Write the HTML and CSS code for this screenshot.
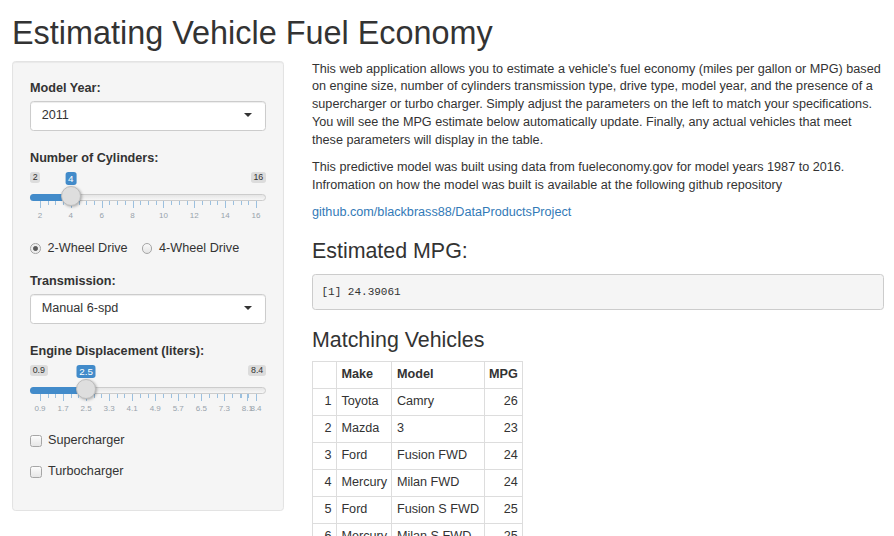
FILE: index.html
```html
<!DOCTYPE html>
<html lang="en">
<head>
<meta charset="utf-8">
<title>Estimating Vehicle Fuel Economy</title>
<link rel="stylesheet" href="styles.css">
</head>
<body>
<div class="container">
  <h1 class="title">Estimating Vehicle Fuel Economy</h1>
  <div class="row">
    <aside class="sidebar well">
      <div class="form-group">
        <label class="control-label">Model Year:</label>
        <div class="select"><span class="select-value">2011</span><span class="caret"></span></div>
      </div>

      <div class="form-group slider-group">
        <label class="control-label">Number of Cylinders:</label>
        <div class="irs">
          <span class="irs-line"></span>
          <span class="irs-min">2</span>
          <span class="irs-max">16</span>
          <div class="irs-scale">
            <span class="irs-bar" style="width: calc(10px + 14.286%)"></span>
            <div class="irs-grid">
              <span class="pol" style="left:0%"></span>
              <span class="pol small" style="left:3.571%"></span>
              <span class="pol small" style="left:7.143%"></span>
              <span class="pol small" style="left:10.714%"></span>
              <span class="pol" style="left:14.286%"></span>
              <span class="pol small" style="left:17.857%"></span>
              <span class="pol small" style="left:21.429%"></span>
              <span class="pol small" style="left:25%"></span>
              <span class="pol" style="left:28.571%"></span>
              <span class="pol small" style="left:32.143%"></span>
              <span class="pol small" style="left:35.714%"></span>
              <span class="pol small" style="left:39.286%"></span>
              <span class="pol" style="left:42.857%"></span>
              <span class="pol small" style="left:46.429%"></span>
              <span class="pol small" style="left:50%"></span>
              <span class="pol small" style="left:53.571%"></span>
              <span class="pol" style="left:57.143%"></span>
              <span class="pol small" style="left:60.714%"></span>
              <span class="pol small" style="left:64.286%"></span>
              <span class="pol small" style="left:67.857%"></span>
              <span class="pol" style="left:71.429%"></span>
              <span class="pol small" style="left:75%"></span>
              <span class="pol small" style="left:78.571%"></span>
              <span class="pol small" style="left:82.143%"></span>
              <span class="pol" style="left:85.714%"></span>
              <span class="pol small" style="left:89.286%"></span>
              <span class="pol small" style="left:92.857%"></span>
              <span class="pol small" style="left:96.429%"></span>
              <span class="pol" style="left:100%"></span>
              <span class="gtext" style="left:0%">2</span>
              <span class="gtext" style="left:14.286%">4</span>
              <span class="gtext" style="left:28.571%">6</span>
              <span class="gtext" style="left:42.857%">8</span>
              <span class="gtext" style="left:57.143%">10</span>
              <span class="gtext" style="left:71.429%">12</span>
              <span class="gtext" style="left:85.714%">14</span>
              <span class="gtext" style="left:100%">16</span>
            </div>
            <span class="irs-single" style="left:14.286%">4</span>
            <span class="irs-handle" style="left:14.286%"></span>
          </div>
        </div>
      </div>

      <div class="form-group radio-group">
        <label class="radio-inline"><span class="radio-circle checked"></span><span>2-Wheel Drive</span></label>
        <label class="radio-inline"><span class="radio-circle"></span><span>4-Wheel Drive</span></label>
      </div>

      <div class="form-group">
        <label class="control-label">Transmission:</label>
        <div class="select"><span class="select-value">Manual 6-spd</span><span class="caret"></span></div>
      </div>

      <div class="form-group slider-group">
        <label class="control-label">Engine Displacement (liters):</label>
        <div class="irs">
          <span class="irs-line"></span>
          <span class="irs-min">0.9</span>
          <span class="irs-max">8.4</span>
          <div class="irs-scale">
            <span class="irs-bar" style="width: calc(10px + 21.333%)"></span>
            <div class="irs-grid">
              <span class="pol" style="left:0%"></span>
              <span class="pol small" style="left:3.556%"></span>
              <span class="pol small" style="left:7.111%"></span>
              <span class="pol" style="left:10.667%"></span>
              <span class="pol small" style="left:14.222%"></span>
              <span class="pol small" style="left:17.778%"></span>
              <span class="pol" style="left:21.333%"></span>
              <span class="pol small" style="left:24.889%"></span>
              <span class="pol small" style="left:28.444%"></span>
              <span class="pol" style="left:32%"></span>
              <span class="pol small" style="left:35.556%"></span>
              <span class="pol small" style="left:39.111%"></span>
              <span class="pol" style="left:42.667%"></span>
              <span class="pol small" style="left:46.222%"></span>
              <span class="pol small" style="left:49.778%"></span>
              <span class="pol" style="left:53.333%"></span>
              <span class="pol small" style="left:56.889%"></span>
              <span class="pol small" style="left:60.444%"></span>
              <span class="pol" style="left:64%"></span>
              <span class="pol small" style="left:67.556%"></span>
              <span class="pol small" style="left:71.111%"></span>
              <span class="pol" style="left:74.667%"></span>
              <span class="pol small" style="left:78.222%"></span>
              <span class="pol small" style="left:81.778%"></span>
              <span class="pol" style="left:85.333%"></span>
              <span class="pol small" style="left:88.889%"></span>
              <span class="pol small" style="left:92.444%"></span>
              <span class="pol" style="left:96%"></span>
              <span class="pol small" style="left:92.889%"></span>
              <span class="pol small" style="left:96.444%"></span>
              <span class="pol" style="left:100%"></span>
              <span class="gtext" style="left:0%">0.9</span>
              <span class="gtext" style="left:10.667%">1.7</span>
              <span class="gtext" style="left:21.333%">2.5</span>
              <span class="gtext" style="left:32%">3.3</span>
              <span class="gtext" style="left:42.667%">4.1</span>
              <span class="gtext" style="left:53.333%">4.9</span>
              <span class="gtext" style="left:64%">5.7</span>
              <span class="gtext" style="left:74.667%">6.5</span>
              <span class="gtext" style="left:85.333%">7.3</span>
              <span class="gtext" style="left:96%">8.1</span>
              <span class="gtext" style="left:100%">8.4</span>
            </div>
            <span class="irs-single" style="left:21.333%">2.5</span>
            <span class="irs-handle" style="left:21.333%"></span>
          </div>
        </div>
      </div>

      <div class="form-group check-group first-check">
        <label class="checkbox"><span class="check-box"></span><span>Supercharger</span></label>
      </div>
      <div class="form-group check-group last-check">
        <label class="checkbox"><span class="check-box"></span><span>Turbocharger</span></label>
      </div>
    </aside>

    <main class="main">
      <p>This web application allows you to estimate a vehicle's fuel economy (miles per gallon or MPG) based on engine size, number of cylinders transmission type, drive type, model year, and the presence of a supercharger or turbo charger. Simply adjust the parameters on the left to match your specifications. You will see the MPG estimate below automatically update. Finally, any actual vehicles that meet these parameters will display in the table.</p>
      <p>This predictive model was built using data from fueleconomy.gov for model years 1987 to 2016. Infromation on how the model was built is available at the following github repository</p>
      <p><a href="#" class="repo-link">github.com/blackbrass88/DataProductsProject</a></p>

      <h3 class="section-title first-section">Estimated MPG:</h3>
      <pre class="output">[1] 24.39061</pre>

      <h3 class="section-title second-section">Matching Vehicles</h3>
      <table class="data-table">
        <thead>
          <tr><th class="idx"></th><th>Make</th><th>Model</th><th class="num">MPG</th></tr>
        </thead>
        <tbody>
          <tr><td class="idx">1</td><td>Toyota</td><td>Camry</td><td class="num">26</td></tr>
          <tr><td class="idx">2</td><td>Mazda</td><td>3</td><td class="num">23</td></tr>
          <tr><td class="idx">3</td><td>Ford</td><td>Fusion FWD</td><td class="num">24</td></tr>
          <tr><td class="idx">4</td><td>Mercury</td><td>Milan FWD</td><td class="num">24</td></tr>
          <tr><td class="idx">5</td><td>Ford</td><td>Fusion S FWD</td><td class="num">25</td></tr>
          <tr><td class="idx">6</td><td>Mercury</td><td>Milan S FWD</td><td class="num">25</td></tr>
          <tr><td class="idx">7</td><td>Honda</td><td>Accord</td><td class="num">24</td></tr>
          <tr><td class="idx">8</td><td>Nissan</td><td>Altima</td><td class="num">25</td></tr>
          <tr><td class="idx">9</td><td>Kia</td><td>Optima</td><td class="num">24</td></tr>
          <tr><td class="idx">10</td><td>Mazda</td><td>6</td><td class="num">23</td></tr>
        </tbody>
      </table>
    </main>
  </div>
</div>
</body>
</html>
```

FILE: styles.css
```css
html {
  scrollbar-width: none;
}

body {
  margin: 0;
  font-family: "Liberation Sans", Arial, Helvetica, sans-serif;
  font-size: 12.65px;
  line-height: 17.8px;
  color: #333;
  background: #fff;
}

.container {
  padding: 0 10px 0 12px;
}

.title {
  font-size: 32.4px;
  font-weight: normal;
  line-height: 1.1;
  margin: 16px 0 8.9px 0;
  color: #333;
}

.row {
  display: flex;
  align-items: flex-start;
  gap: 28px;
}

/* ---------- sidebar ---------- */
.well {
  box-sizing: border-box;
  width: 272px;
  flex: none;
  padding: 17px;
  background: #f5f5f5;
  border: 1px solid #e3e3e3;
  border-radius: 3.5px;
  box-shadow: inset 0 1px 1px rgba(0, 0, 0, 0.05);
}

.form-group {
  margin-bottom: 17.5px;
}

.control-label {
  display: block;
  font-weight: bold;
  padding-top: 1px;
  margin-bottom: 3.45px;
}

.select {
  position: relative;
  box-sizing: border-box;
  height: 30.3px;
  display: flex;
  align-items: center;
  padding: 0 10.7px;
  background: #fff;
  border: 1px solid #ccc;
  border-radius: 3.5px;
  box-shadow: inset 0 1px 1px rgba(0, 0, 0, 0.075);
  color: #333;
}

.caret {
  position: absolute;
  right: 13.3px;
  top: 50%;
  margin-top: -2.5px;
  width: 0;
  height: 0;
  border-style: solid;
  border-width: 4.45px 4.45px 0 4.45px;
  border-color: #333 transparent transparent transparent;
}

/* slider */
.slider-group {
  margin-bottom: 15.5px;
}

.irs {
  position: relative;
  height: 52px;
}

.irs-line {
  position: absolute;
  left: 0;
  right: 0;
  top: 23px;
  height: 7px;
  box-sizing: border-box;
  border: 1px solid #ccc;
  border-radius: 14px;
  background: linear-gradient(to bottom, #ddd -50%, #fff 150%);
}

.irs-min,
.irs-max {
  position: absolute;
  top: 1.5px;
  font-size: 8.9px;
  line-height: 8.5px;
  padding: 1px 2.7px;
  background: rgba(0, 0, 0, 0.1);
  border-radius: 2.7px;
  color: #333;
}

.irs-min {
  left: 0;
}

.irs-max {
  right: 0;
}

.irs-scale {
  position: absolute;
  left: 10px;
  right: 10px;
  top: 0;
  bottom: 0;
}

.irs-bar {
  position: absolute;
  left: -10px;
  top: 23px;
  height: 7px;
  background: #428bca;
  border-radius: 14px 0 0 14px;
}

.irs-single {
  position: absolute;
  top: 0.75px;
  transform: translateX(-50%);
  font-size: 9.8px;
  line-height: 11.3px;
  padding: 1px 2.7px;
  background: #428bca;
  color: #fff;
  border-radius: 2.7px;
  white-space: nowrap;
}

.irs-handle {
  position: absolute;
  top: 15px;
  width: 20px;
  height: 20px;
  box-sizing: border-box;
  transform: translateX(-50%);
  background: #dedede;
  border: 1px solid #bdbdbd;
  border-radius: 50%;
  box-shadow: 1px 1px 3px rgba(0, 0, 0, 0.3);
}

.irs-grid {
  position: absolute;
  left: 0;
  right: 0;
  top: 0;
  bottom: 0;
}

.pol {
  position: absolute;
  top: 30px;
  width: 1px;
  height: 7.5px;
  background: #428bca;
  opacity: 0.5;
}

.pol.small {
  height: 4px;
}

.gtext {
  position: absolute;
  top: 41.5px;
  transform: translateX(-50%);
  font-size: 8px;
  line-height: 8px;
  color: #98a3ac;
  white-space: nowrap;
}

/* radios */
.radio-group {
  display: flex;
  gap: 14px;
  padding-top: 1.5px;
  margin-bottom: 14px;
}

.radio-inline,
.checkbox {
  display: flex;
  align-items: center;
  font-weight: normal;
}

.radio-circle {
  box-sizing: border-box;
  width: 10.5px;
  height: 10.5px;
  margin-right: 7px;
  border: 1px solid #a6a6a6;
  border-radius: 50%;
  background: linear-gradient(to bottom, #fafafa, #e4e4e4);
}

.radio-circle.checked {
  background: radial-gradient(circle, #5a5a5a 0, #5a5a5a 1.8px, #8d8d8d 2.4px, #efefef 2.9px, #e4e4e4 100%);
}

/* checkboxes */
.check-group {
  padding-top: 1px;
}

.first-check {
  margin-bottom: 12.2px;
}

.last-check {
  margin-bottom: 11.7px;
}

.check-box {
  box-sizing: border-box;
  width: 11.6px;
  height: 11.6px;
  margin-right: 6.4px;
  border: 1px solid #a6a6a6;
  border-radius: 2.5px;
  background: linear-gradient(to bottom, #fcfcfc, #e6e6e6);
}

/* ---------- main ---------- */
.main {
  width: 572px;
  flex: none;
}

.main p {
  margin: 0 0 9.6px;
}

.repo-link {
  color: #337ab7;
  text-decoration: none;
}

.section-title {
  font-size: 21.4px;
  font-weight: normal;
  line-height: 1.1;
  color: #333;
}

.first-section {
  margin: 17.8px 0 11px;
}

.second-section {
  margin: 19px 0 9px;
}

.output {
  margin: 0 0 8.9px;
  padding: 8.4px 8.45px;
  font-family: "Liberation Mono", "Courier New", monospace;
  font-size: 11px;
  line-height: 16.5px;
  color: #333;
  background: #f5f5f5;
  border: 1px solid #ccc;
  border-radius: 3.5px;
}

.data-table {
  border-collapse: collapse;
  border: 1px solid #ddd;
}

.data-table th,
.data-table td {
  border: 1px solid #ddd;
  padding: 4.1px 4.45px;
  text-align: left;
  vertical-align: top;
}

.data-table th {
  font-weight: bold;
}

.data-table .num,
.data-table .idx {
  text-align: right;
}
```
